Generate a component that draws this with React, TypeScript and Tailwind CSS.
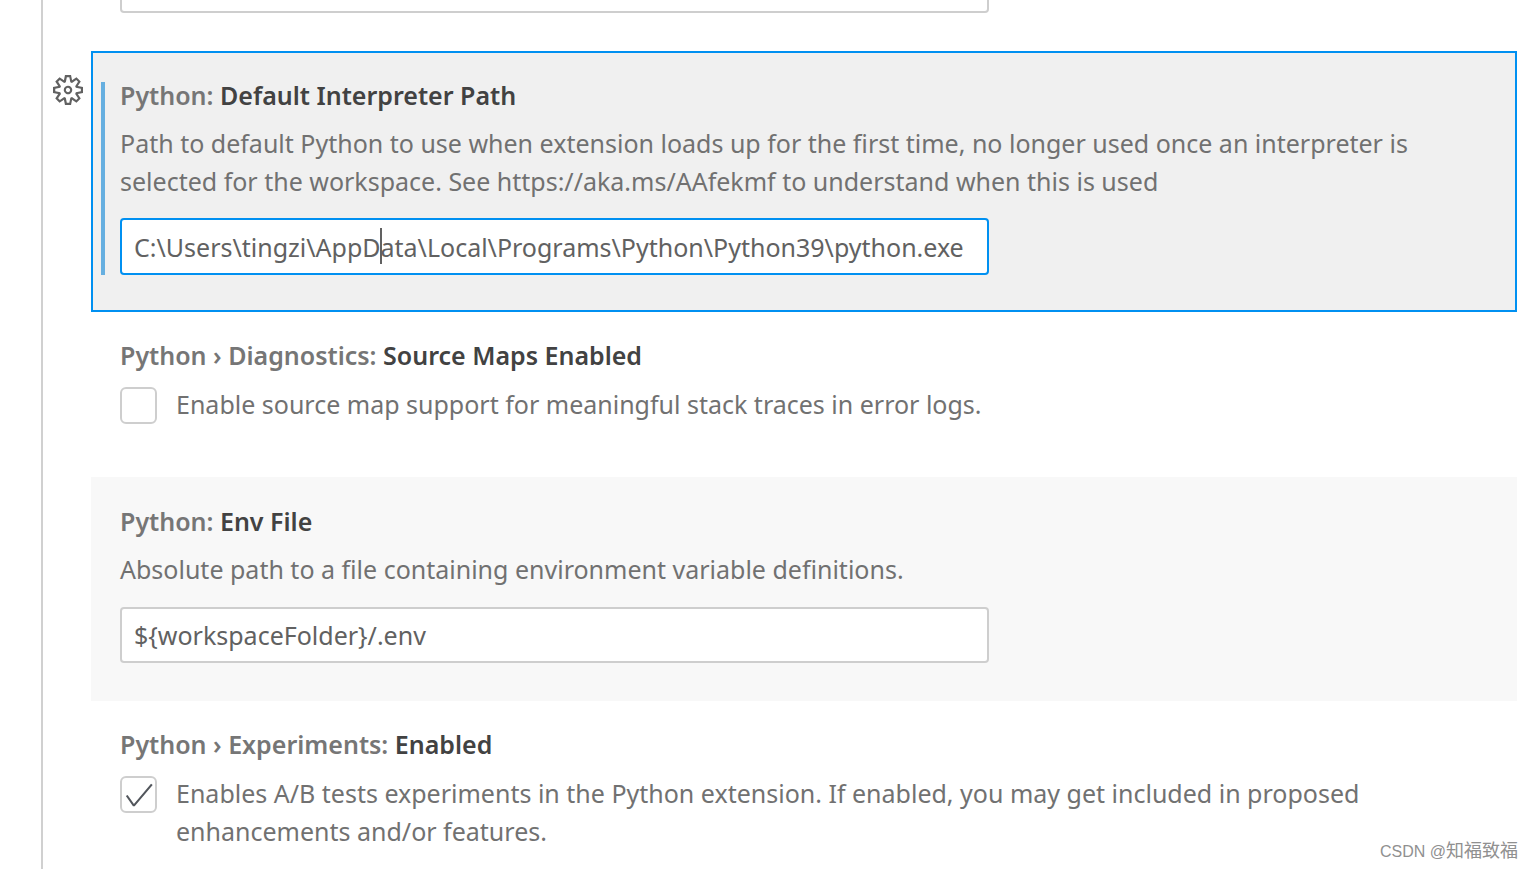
import { useState } from "react";
import type { ReactNode } from "react";
import { VscCheck, VscSettingsGear } from "react-icons/vsc";

function Title({ category, name }: { category: string; name: string }) {
  return (
    <h2 className="font-semibold text-[#767676]">
      {category}: <span className="text-[#424242]">{name}</span>
    </h2>
  );
}

function CheckSetting({ id, initial, children }: { id: string; initial: boolean; children: ReactNode }) {
  const [checked, setChecked] = useState(initial);

  return (
    <div className="mt-[11px] flex items-start gap-[19px]">
      <span className="relative mt-0.5 flex size-[37px] shrink-0">
        <input
          id={id}
          type="checkbox"
          checked={checked}
          onChange={(e) => setChecked(e.target.checked)}
          className="size-full appearance-none rounded-md border-2 border-[#cecece] bg-white"
        />
        {checked && (
          <VscCheck className="pointer-events-none absolute inset-0 m-auto size-[34px] text-[#52565c]" />
        )}
      </span>
      <label htmlFor={id} className="text-[#717171]">
        {children}
      </label>
    </div>
  );
}

export default function App() {
  return (
    <div className="h-screen overflow-hidden bg-white pl-[41px] font-['Noto_Sans','Open_Sans',sans-serif] text-[25px] leading-[38px]">
      <main className="h-full border-l-2 border-[#d0d0d0] pr-4 pl-12">
        <div className="flex h-[13px] items-end overflow-hidden pl-[29px]">
          <input
            aria-label="Previous setting"
            className="h-14 w-[869px] shrink-0 rounded border-2 border-[#cecece] bg-white px-3"
          />
        </div>

        <section className="relative mt-[38px] border-2 border-[#0090f1] bg-[#f0f0f0] pt-[23px] pb-[35px] pl-[27px]">
          <button type="button" aria-label="More actions" className="absolute top-[22px] -left-10 text-[#616161]">
            <VscSettingsGear className="size-[30px]" />
          </button>
          <div className="absolute top-[29px] bottom-[35px] left-2 w-1 bg-[#66afe0]" />
          <Title category="Python" name="Default Interpreter Path" />
          <label htmlFor="interpreter" className="mt-2.5 block max-w-[1340px] text-[#717171]">
            Path to default Python to use when extension loads up for the first time, no longer used once an interpreter is
            selected for the workspace. See https://aka.ms/AAfekmf to understand when this is used
          </label>
          <div className="relative mt-[18px] w-[869px]">
            <input
              id="interpreter"
              defaultValue="C:\Users\tingzi\AppData\Local\Programs\Python\Python39\python.exe"
              className="block h-[57px] w-full rounded border-2 border-[#0090f1] bg-white px-3 text-[#616161] outline-none"
            />
            <span className="absolute top-2.5 left-[260px] h-9 w-0.5 bg-[#616161]" />
          </div>
        </section>

        <section className="pt-6 pb-[53px] pl-[29px]">
          <Title category="Python › Diagnostics" name="Source Maps Enabled" />
          <CheckSetting id="source-maps" initial={false}>
            Enable source map support for meaningful stack traces in error logs.
          </CheckSetting>
        </section>

        <section className="bg-[#f8f8f8] pt-[25px] pb-[38px] pl-[29px]">
          <Title category="Python" name="Env File" />
          <label htmlFor="env-file" className="mt-2.5 block text-[#717171]">
            Absolute path to a file containing environment variable definitions.
          </label>
          <input
            id="env-file"
            defaultValue="${workspaceFolder}/.env"
            className="mt-[19px] block h-14 w-[869px] rounded border-2 border-[#cecece] bg-white px-3 text-[#616161] outline-none"
          />
        </section>

        <section className="pt-6 pl-[29px]">
          <Title category="Python › Experiments" name="Enabled" />
          <CheckSetting id="experiments" initial={true}>
            Enables A/B tests experiments in the Python extension. If enabled, you may get included in proposed
            enhancements and/or features.
          </CheckSetting>
        </section>
      </main>

      <p className="absolute right-[15px] bottom-[5px] font-['Liberation_Sans','Noto_Sans_CJK_SC',sans-serif] text-base leading-6 text-[#909090]">
        CSDN @<span className="text-lg leading-6">知福致福</span>
      </p>
    </div>
  );
}
